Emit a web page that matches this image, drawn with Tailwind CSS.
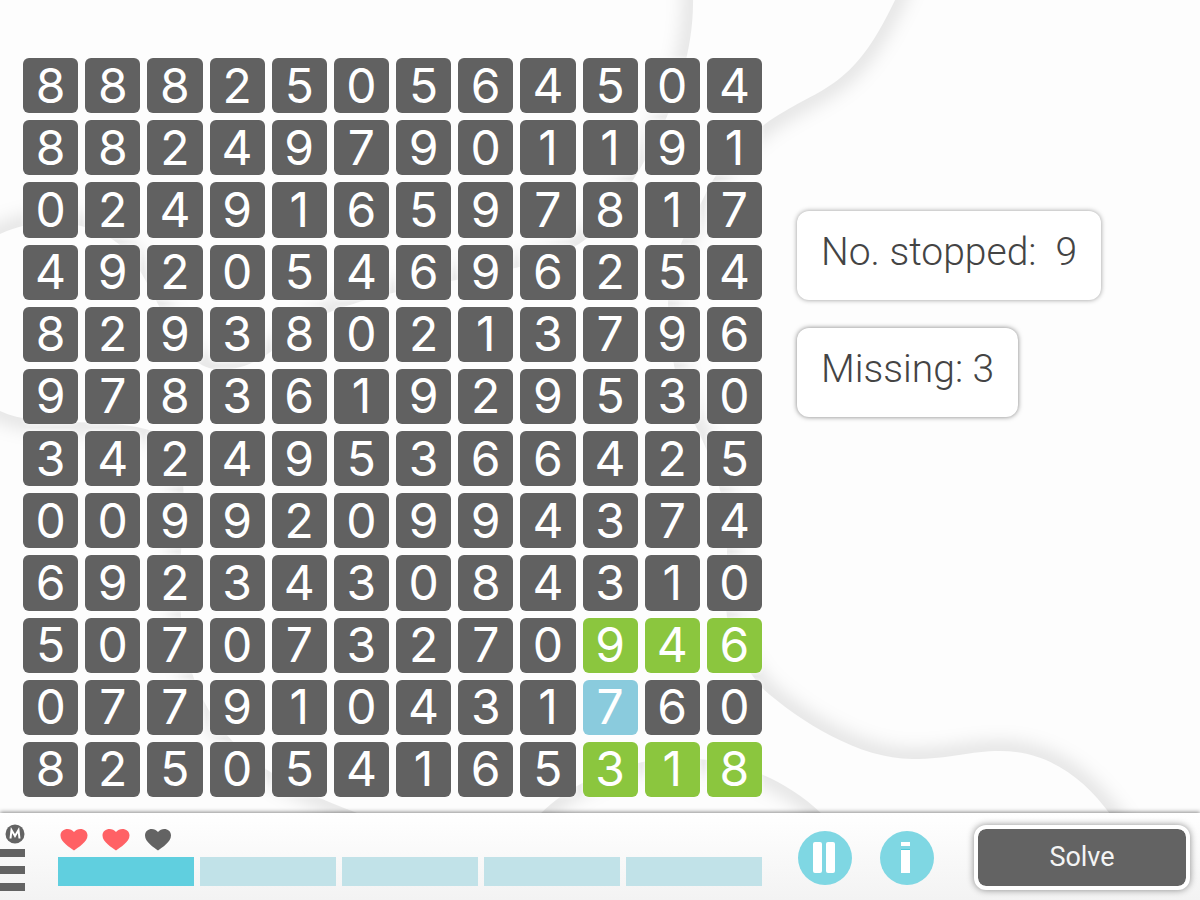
<!DOCTYPE html>
<html lang="en">
<head>
    <meta charset="UTF-8">
    <meta name="viewport" content="width=device-width, initial-scale=1.0">
    <title>Number Grid</title>
    <script src="https://cdn.jsdelivr.net/npm/@tailwindcss/browser@4"></script>
</head>
<body class="relative isolate flex min-h-screen flex-col overflow-x-hidden bg-[#fdfdfd] font-['Roboto',sans-serif] text-[#444444]">

    <!-- Background waves: blurred strokes, clipped to one side of each curve -->
    <svg class="absolute inset-0 -z-10 h-full w-full" viewBox="0 0 1200 900" preserveAspectRatio="xMinYMin slice" aria-hidden="true">
        <defs>
            <filter id="soft" x="-10%" y="-10%" width="120%" height="120%"><feGaussianBlur stdDeviation="10"/></filter>
            <clipPath id="sideA"><path d="M0 234C40 215 90 220 120 245C160 285 170 360 213 369C270 375 290 320 350 305C440 275 550 275 590 235C625 200 694 100 693 0H0Z"/></clipPath>
            <clipPath id="sideB"><path d="M895 0C850 95 820 85 765 124C730 150 712 180 705 195C690 225 668 260 668 303C668 340 675 385 690 415C708 450 727 490 727 550C727 600 715 630 762 688C800 722 860 759 912 759C950 759 970 751 1000 751C1050 751 1085 780 1110 814H1200V0Z"/></clipPath>
            <clipPath id="sideC"><path d="M540 814C610 745 740 735 822 814Z"/></clipPath>
            <clipPath id="sideD"><path d="M0 411C40 430 110 415 155 432C200 455 178 520 180 600C185 740 270 780 360 814H0Z"/></clipPath>
        </defs>
        <g fill="none" stroke="#000" stroke-opacity=".17" stroke-width="12">
            <g clip-path="url(#sideA)"><path filter="url(#soft)" d="M-20 244L0 234C40 215 90 220 120 245C160 285 170 360 213 369C270 375 290 320 350 305C440 275 550 275 590 235C625 200 694 100 693 0V-20"/></g>
            <g clip-path="url(#sideB)"><path filter="url(#soft)" d="M904 -20L895 0C850 95 820 85 765 124C730 150 712 180 705 195C690 225 668 260 668 303C668 340 675 385 690 415C708 450 727 490 727 550C727 600 715 630 762 688C800 722 860 759 912 759C950 759 970 751 1000 751C1050 751 1085 780 1110 814L1124 834"/></g>
            <g clip-path="url(#sideC)"><path filter="url(#soft)" d="M520 834L540 814C610 745 740 735 822 814L840 834"/></g>
            <g clip-path="url(#sideD)"><path filter="url(#soft)" d="M-20 400L0 411C40 430 110 415 155 432C200 455 178 520 180 600C185 740 270 780 360 814L400 826"/></g>
        </g>
    </svg>

    <main class="grid grow grid-cols-[739fr_438fr] items-start pt-[58px] pb-[16px] pl-[23px]">
        <!-- Number grid -->
        <div id="grid" class="grid grid-cols-12 gap-[7px]" aria-label="Number grid"></div>

        <!-- Counters -->
        <div class="flex flex-col items-start gap-7 pt-[153px] pl-[35px] text-[39px] leading-[44px] font-light whitespace-pre">
            <p class="rounded-xl bg-white px-6 pt-[19px] pb-[26px] shadow-[0_0_5px_rgba(0,0,0,0.4)]">No. stopped:  9</p>
            <p class="rounded-xl bg-white px-6 pt-[19px] pb-[26px] shadow-[0_0_5px_rgba(0,0,0,0.5)]">Missing: 3</p>
        </div>
    </main>

    <footer class="grid grid-cols-[739fr_438fr] bg-linear-to-b from-white to-[#f3f3f3] pl-[23px] shadow-[0_-1px_4px_rgba(0,0,0,0.45)]">
        <div class="-ml-[23px] flex gap-[33px] pt-[11px]">
            <!-- Menu -->
            <button type="button" class="flex w-[25px] flex-col items-end" aria-label="Menu">
                <svg class="size-5" viewBox="0 0 20 20" aria-hidden="true">
                    <circle cx="10" cy="10" r="9.500" fill="#636363"/>
                    <path d="M5.500 14.500L6.500 6L10 12L13.500 6L14.500 14.500" fill="none" stroke="#fff" stroke-width="2"/>
                </svg>
                <span class="mt-[5px] h-2 w-full bg-[#636363]"></span>
                <span class="mt-[9px] h-2 w-full bg-[#636363]"></span>
                <span class="mt-[9px] h-2 w-full bg-[#636363]"></span>
            </button>

            <div class="grow">
                <!-- Lives -->
                <div class="flex gap-[14px] pt-[4px] pl-[2px]" role="img" aria-label="2 of 3 lives left">
                    <svg class="h-[24px] w-[28px]" viewBox="0 0 28 24" fill="#ff6165"><path d="M14 22.500C10 19.500 0.500 14 0.500 7.500C0.500 0.500 10 -1 14 4C18 -1 27.500 0.500 27.500 7.500C27.500 14 18 19.500 14 22.500Z"/></svg>
                    <svg class="h-[24px] w-[28px]" viewBox="0 0 28 24" fill="#ff6165"><path d="M14 22.500C10 19.500 0.500 14 0.500 7.500C0.500 0.500 10 -1 14 4C18 -1 27.500 0.500 27.500 7.500C27.500 14 18 19.500 14 22.500Z"/></svg>
                    <svg class="h-[24px] w-[28px]" viewBox="0 0 28 24" fill="#636363"><path d="M14 22.500C10 19.500 1 14 1 7.500C1 0.500 10 -1 14 4C18 -1 27 0.500 27 7.500C27 14 18 19.500 14 22.500Z"/></svg>
                </div>
                <!-- Progress -->
                <div class="mt-[5px] grid grid-cols-5 gap-[6px]" role="progressbar" aria-label="Progress" aria-valuemin="0" aria-valuemax="5" aria-valuenow="1">
                    <span class="h-[29px] bg-[#60cfdf]"></span>
                    <span class="h-[29px] bg-[#c1e2e8]"></span>
                    <span class="h-[29px] bg-[#c1e2e8]"></span>
                    <span class="h-[29px] bg-[#c1e2e8]"></span>
                    <span class="h-[29px] bg-[#c1e2e8]"></span>
                </div>
            </div>
        </div>

        <div class="flex items-start gap-7 pt-[12px] pr-[10px] pb-[10px] pl-9">
            <button type="button" class="mt-[6px] size-[54px] shrink-0 rounded-full bg-[#7fd7e3]" aria-label="Pause">
                <svg viewBox="0 0 54 54" fill="#fff"><rect x="15" y="11" width="9" height="31" rx="2"/><rect x="28" y="11" width="9" height="31" rx="2"/></svg>
            </button>
            <button type="button" class="mt-[6px] size-[54px] shrink-0 rounded-full bg-[#7fd7e3]" aria-label="Info">
                <svg viewBox="0 0 54 54"><path d="M21 18h9v1h-9z" fill="#50c8d8"/><path d="M21 11h9v4h-9zM21 19h9v23h-9z" fill="#fff"/></svg>
            </button>
            <button type="button" class="ml-[12px] h-[65px] grow rounded-xl border-4 border-white bg-[#636363] bg-clip-padding text-[27px] text-[#f4f4f4] shadow-[0_0_7px_rgba(0,0,0,0.45)]">Solve</button>
        </div>
    </footer>

    <script>
        const rows = [
            "888250564504",
            "882497901191",
            "024916597817",
            "492054696254",
            "829380213796",
            "978361929530",
            "342495366425",
            "009920994374",
            "692343084310",
            "507073270946",
            "077910431760",
            "825054165318",
        ];
        // g = matched, b = selected
        const marks = { 9: "---------ggg", 10: "---------b--", 11: "---------ggg" };
        const colors = { g: "bg-[#8bc63e]", b: "bg-[#8acbdd]", "-": "bg-[#616161]" };

        const grid = document.getElementById("grid");
        rows.forEach((row, y) => {
            [...row].forEach((digit, x) => {
                const tile = document.createElement("button");
                tile.type = "button";
                tile.className = "flex aspect-square min-w-0 items-center justify-center rounded-md font-['Inter',sans-serif] text-[48px] leading-none text-white shadow-[0_0_4px_rgba(255,255,255,0.9)]";
                tile.classList.add(colors[marks[y] ? marks[y][x] : "-"]);
                tile.textContent = digit;
                grid.appendChild(tile);
            });
        });
    </script>
</body>
</html>
